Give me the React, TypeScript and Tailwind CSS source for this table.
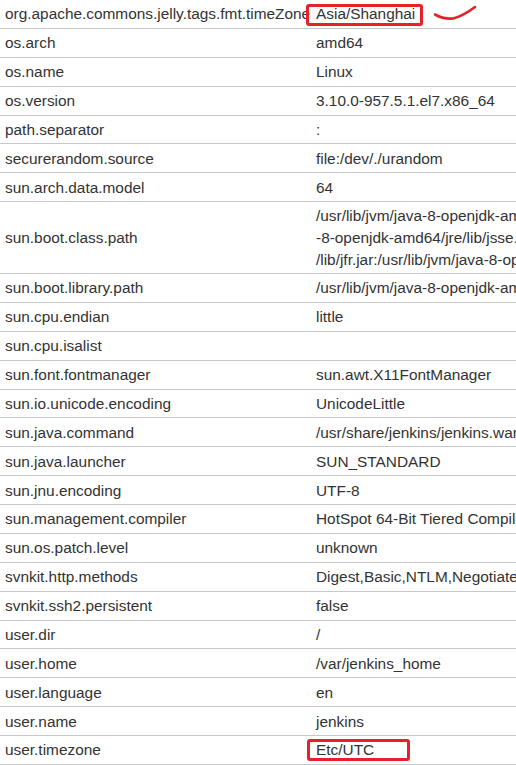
import React from "react";

type Row = { k: string; v: string | string[] };

const rows: Row[] = [
  { k: "org.apache.commons.jelly.tags.fmt.timeZone", v: "Asia/Shanghai" },
  { k: "os.arch", v: "amd64" },
  { k: "os.name", v: "Linux" },
  { k: "os.version", v: "3.10.0-957.5.1.el7.x86_64" },
  { k: "path.separator", v: ":" },
  { k: "securerandom.source", v: "file:/dev/./urandom" },
  { k: "sun.arch.data.model", v: "64" },
  {
    k: "sun.boot.class.path",
    v: [
      "/usr/lib/jvm/java-8-openjdk-amd64/jre/lib/resources.jar:/usr/lib/jvm/java",
      "-8-openjdk-amd64/jre/lib/jsse.jar:/usr/lib/jvm/java-8-openjdk-amd64/jre",
      "/lib/jfr.jar:/usr/lib/jvm/java-8-openjdk-amd64/jre/classes",
    ],
  },
  { k: "sun.boot.library.path", v: "/usr/lib/jvm/java-8-openjdk-amd64/jre/lib/amd64" },
  { k: "sun.cpu.endian", v: "little" },
  { k: "sun.cpu.isalist", v: "" },
  { k: "sun.font.fontmanager", v: "sun.awt.X11FontManager" },
  { k: "sun.io.unicode.encoding", v: "UnicodeLittle" },
  { k: "sun.java.command", v: "/usr/share/jenkins/jenkins.war" },
  { k: "sun.java.launcher", v: "SUN_STANDARD" },
  { k: "sun.jnu.encoding", v: "UTF-8" },
  { k: "sun.management.compiler", v: "HotSpot 64-Bit Tiered Compilers" },
  { k: "sun.os.patch.level", v: "unknown" },
  { k: "svnkit.http.methods", v: "Digest,Basic,NTLM,Negotiate" },
  { k: "svnkit.ssh2.persistent", v: "false" },
  { k: "user.dir", v: "/" },
  { k: "user.home", v: "/var/jenkins_home" },
  { k: "user.language", v: "en" },
  { k: "user.name", v: "jenkins" },
  { k: "user.timezone", v: "Etc/UTC" },
];

export default function App() {
  return (
    <div
      className="relative w-[516px] h-[765px] overflow-hidden bg-white text-[#333333] text-[15.4px]"
      style={{ fontFamily: '"Liberation Sans", Arial, sans-serif' }}
    >
      <div className="flex flex-col w-[900px]">
        {rows.map((r) => {
          const multi = Array.isArray(r.v);
          return (
            <div
              key={r.k}
              className="flex items-center border-b border-[#c8c8c8] py-[2.45px]"
            >
              <div className="w-[311px] shrink-0 pl-[5px] leading-[23px] whitespace-nowrap">
                {r.k}
              </div>
              <div className="pl-[5px] whitespace-nowrap">
                {multi ? (
                  (r.v as string[]).map((l) => (
                    <div key={l} className="leading-[22px]">
                      {l}
                    </div>
                  ))
                ) : (
                  <div className="leading-[23px] min-h-[23px]">{r.v as string}</div>
                )}
              </div>
            </div>
          );
        })}
      </div>

      {/* annotation boxes */}
      <div className="absolute left-[306px] top-[4px] w-[117px] h-[22px] border-[3px] border-[#e5212a] rounded-[3px]" />
      <div className="absolute left-[307px] top-[739px] w-[103px] h-[22px] border-[3px] border-[#e5212a] rounded-[3px]" />
      <svg
        className="absolute left-0 top-0"
        width="516"
        height="40"
        viewBox="0 0 516 40"
      >
        <path
          d="M435 14.5 Q444 19.5 453 18.5 Q463 16 475 7"
          fill="none"
          stroke="#e5212a"
          strokeWidth="2.6"
          strokeLinecap="round"
        />
      </svg>
    </div>
  );
}
